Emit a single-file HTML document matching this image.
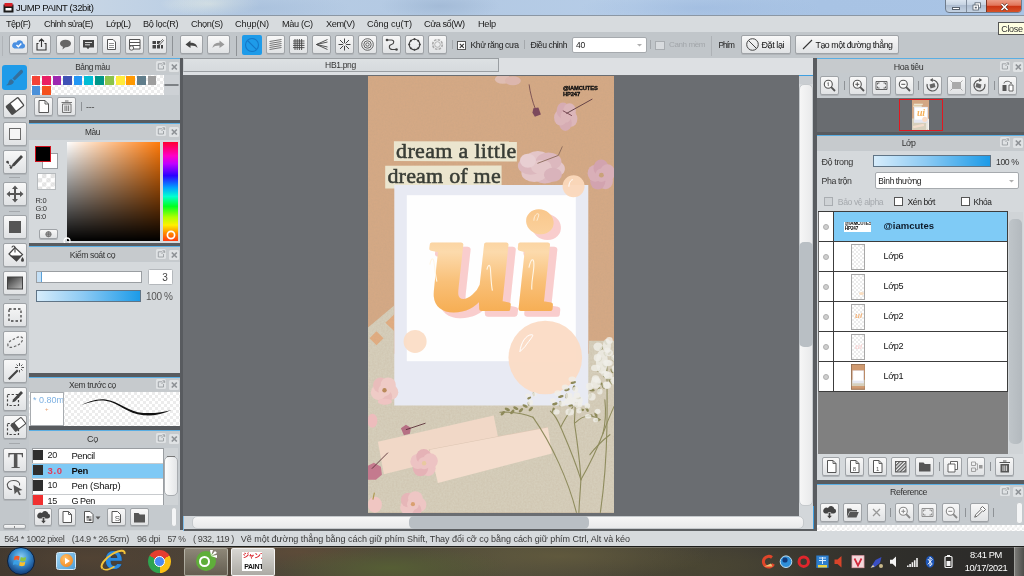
<!DOCTYPE html>
<html><head><meta charset="utf-8"><title>JUMP PAINT</title>
<style>
*{box-sizing:border-box;margin:0;padding:0}
html,body{width:1024px;height:576px;overflow:hidden;background:#d2d6d9}
body{font-family:"Liberation Sans",sans-serif;font-size:9px;color:#222;position:relative}
.abs,.abs>*{position:absolute}
#root{position:absolute;left:0;top:0;width:1024px;height:576px;overflow:hidden;will-change:transform;-webkit-font-smoothing:antialiased}
#root div,#root span,#root svg{position:absolute}
.t{white-space:nowrap;line-height:1}
/* title */
#title{left:0;top:0;width:1024px;height:16px;background:linear-gradient(90deg,#d3dde8 0,#c6d5e5 9%,#b7cce4 22%,#b3c9e3 45%,#b6cde8 62%,#a8c3e4 80%,#a9c4e5 100%)}
#menu{left:0;top:16px;width:1024px;height:16px;background:#d7dbde}
#menu span{top:4.300px;font-size:9.200px;color:#1a1a1a}
#tbar{left:0;top:32px;width:1024px;height:26px;background:#c1c6ca}
.btn{background:linear-gradient(#f8f8f8,#e0e2e4);border:1px solid #9fa3a7;border-radius:2px;box-shadow:0 1px 0 #b0b4b8}
.sep{width:1px;background:#8e9296}
.hdr{background:#c6cacd;height:15px;border-top:1.400px solid #5aaee3}
.hdr .t{font-size:9px;color:#333;top:3.500px}
.pbody{background:#d5d9dc}

.ck{background-color:#fff;background-image:linear-gradient(45deg,#ececec 25%,transparent 25%,transparent 75%,#ececec 75%),linear-gradient(45deg,#ececec 25%,transparent 25%,transparent 75%,#ececec 75%);background-size:6px 6px;background-position:0 0,3px 3px}
.dk{background:#585b5f}
.fl{width:10.500px;height:10px;background:#dfe2e4;border-radius:1.500px}
.cl{width:10.500px;height:10px;background:#dfe2e4;border-radius:1.500px}
body{letter-spacing:-.3px}
</style></head><body><div id="root">

<!-- TITLE BAR -->
<div id="title">
  <div style="left:0;top:0;width:1024px;height:16px;background:radial-gradient(ellipse 60px 14px at 440px 6px,rgba(150,175,205,.55),transparent),radial-gradient(ellipse 90px 16px at 260px 8px,rgba(160,185,215,.5),transparent),radial-gradient(ellipse 50px 12px at 210px 4px,rgba(235,240,230,.7),transparent),radial-gradient(ellipse 120px 16px at 700px 8px,rgba(150,180,220,.5),transparent)"></div>
  <div style="left:0;top:15.200px;width:1024px;height:1.200px;background:#8b97a4"></div>
  <svg width="11" height="11" viewBox="0 0 11 11" style="left:3px;top:2px"><rect x=".5" y="2.500" width="10" height="8" fill="#1a1a1a"/><rect x="1.500" y="1" width="8" height="3.500" fill="#d8232a"/><rect x="2.500" y="6" width="6" height="2.500" fill="#fff"/></svg>
  <span class="t" style="left:16px;top:3px;font-size:9.500px;color:#111;letter-spacing:-0.412px">JUMP PAINT (32bit)</span>
  <div style="left:944.500px;top:-2px;width:77.500px;height:14.800px;border:1px solid #6f7c8c;border-radius:0 0 4px 4px;background:linear-gradient(#dfe8f2 0,#c6d3e2 45%,#aebdd0 50%,#c4d2e2 100%);overflow:hidden">
    <div style="left:20.500px;top:0;width:1px;height:14px;background:#7f8c9c"></div>
    <div style="left:40.700px;top:0;width:36px;height:14px;background:linear-gradient(#eda48f 0,#e2755a 45%,#cb3413 52%,#d9582c 100%);border-left:1px solid #7a3424"></div>
    <div style="left:6.500px;top:8px;width:8px;height:2.600px;background:#fff;border:.6px solid #56606c"></div>
    <svg width="10" height="10" viewBox="0 0 10 10" style="left:26.500px;top:3px"><rect x="3" y=".8" width="5.500" height="5" fill="#fff" stroke="#56606c" stroke-width=".8"/><rect x="1" y="3" width="5.500" height="5" fill="#fff" stroke="#56606c" stroke-width=".8"/><rect x="2.800" y="4.800" width="2" height="1.600" fill="#56606c"/></svg>
    <svg width="9" height="8" viewBox="0 0 9 8" style="left:54.500px;top:4px"><path d="M1.500 1l6 6M7.500 1l-6 6" stroke="#5a2a20" stroke-width="2.800"/><path d="M1.500 1l6 6M7.500 1l-6 6" stroke="#fff" stroke-width="1.700"/></svg>
  </div>
</div>
<!-- MENU -->
<div id="menu">
  <span class="t" style="left:6px;letter-spacing:-0.562px">Tệp(F)</span>
  <span class="t" style="left:44px;letter-spacing:-0.479px">Chỉnh sửa(E)</span>
  <span class="t" style="left:106px;letter-spacing:-0.497px">Lớp(L)</span>
  <span class="t" style="left:143px;letter-spacing:-0.350px">Bộ lọc(R)</span>
  <span class="t" style="left:191px;letter-spacing:-0.370px">Chọn(S)</span>
  <span class="t" style="left:235px;letter-spacing:-0.120px">Chụp(N)</span>
  <span class="t" style="left:282px;letter-spacing:-0.365px">Màu (C)</span>
  <span class="t" style="left:326px;letter-spacing:-0.428px">Xem(V)</span>
  <span class="t" style="left:367px;letter-spacing:-0.106px">Công cụ(T)</span>
  <span class="t" style="left:424px;letter-spacing:-0.494px">Cửa sổ(W)</span>
  <span class="t" style="left:478px;letter-spacing:-0.302px">Help</span>
</div>
<!-- TOOLBAR -->
<div id="tbar">
  <div class="sep" style="left:2px;top:4px;height:20px;background:#b0b4b8"></div>
  <!-- file buttons -->
  <div class="btn" style="left:9px;top:3px;width:19px;height:19px"><svg width="17" height="17" viewBox="0 0 17 17"><path d="M4.5 12.5h8.3a2.6 2.6 0 0 0 .4-5.1 3.6 3.6 0 0 0-6.9-1A3.1 3.1 0 0 0 4.500 12.500z" fill="#4a90e2"/><path d="M6.500 9l1.800 1.800 3-3.300" stroke="#fff" stroke-width="1.400" fill="none"/></svg></div>
  <div class="btn" style="left:32px;top:3px;width:19px;height:19px"><svg width="17" height="17" viewBox="0 0 17 17"><path d="M5.500 7.500H4v6.500h9V7.500h-1.500M8.500 11V3.500M6 5.500l2.500-2.500 2.500 2.500" stroke="#333" stroke-width="1.100" fill="none"/></svg></div>
  <div class="btn" style="left:55.500px;top:3px;width:19px;height:19px"><svg width="17" height="17" viewBox="0 0 17 17"><ellipse cx="8.500" cy="7.500" rx="5.500" ry="3.800" fill="#666"/><path d="M6 10.500l-.5 3 3-2.500z" fill="#666"/></svg></div>
  <div class="btn" style="left:78.500px;top:3px;width:19px;height:19px"><svg width="17" height="17" viewBox="0 0 17 17"><path d="M3 4h11v7.500H9.500l-1.500 1.800-1.500-1.800H3z" fill="#444"/><path d="M5 6.500h7M5 8.800h5" stroke="#ddd" stroke-width="1"/></svg></div>
  <div class="btn" style="left:102px;top:3px;width:19px;height:19px"><svg width="17" height="17" viewBox="0 0 17 17"><path d="M4.500 3.500h5.500l2.500 2.500v7.500h-8z" fill="#fff" stroke="#555" stroke-width="1"/><path d="M6 7.500h5M6 9.500h5M6 11.500h5" stroke="#777" stroke-width=".8"/></svg></div>
  <div class="btn" style="left:125px;top:3px;width:19px;height:19px"><svg width="17" height="17" viewBox="0 0 17 17"><path d="M3.500 3.500h10.500v9.500h-10.500zM3.500 6.500h10.500M3.500 9.500h10.500" fill="#fff" stroke="#555" stroke-width="1"/><circle cx="5.500" cy="12" r="2.200" fill="#eee" stroke="#555" stroke-width=".9"/></svg></div>
  <div class="btn" style="left:148px;top:3px;width:19px;height:19px"><svg width="17" height="17" viewBox="0 0 17 17"><path d="M3.500 5h3.500v3h-3.500zM8 5h3v3h-3zM3.500 9h3.500v3.500h-3.500zM8 9h3v3.500h-3zM12 9h2v3.500h-2z" fill="#444"/><path d="M9.500 8l4-4.500 1 1-4 4.500z" fill="#fff" stroke="#444" stroke-width=".8"/></svg></div>
  <div class="sep" style="left:172px;top:4px;height:20px"></div>
  <!-- undo / redo -->
  <div class="btn" style="left:179.500px;top:3px;width:23px;height:19px"><svg width="21" height="17" viewBox="0 0 21 17"><path d="M4.500 8.500l5-4v2.300c4 0 6.500 1.700 7 5.200-1.500-2-3.500-2.600-7-2.600v2.600z" fill="#444"/></svg></div>
  <div class="btn" style="left:207px;top:3px;width:23px;height:19px"><svg width="21" height="17" viewBox="0 0 21 17"><path d="M16.500 8.500l-5-4v2.300c-4 0-6.500 1.700-7 5.200 1.500-2 3.500-2.600 7-2.600v2.600z" fill="#9a9a9a"/></svg></div>
  <div class="sep" style="left:235.500px;top:4px;height:20px"></div>
  <!-- snap buttons -->
  <div style="left:241.500px;top:2.500px;width:20px;height:20px;background:#1e9be9;border-radius:2px"><svg width="20" height="20" viewBox="0 0 20 20"><circle cx="10" cy="10" r="6.500" fill="none" stroke="#1578c8" stroke-width="1.100"/><path d="M5.500 5.500l9 9" stroke="#1578c8" stroke-width="1.100"/></svg></div>
  <div class="btn" style="left:265.500px;top:3px;width:19px;height:19px"><svg width="17" height="17" viewBox="0 0 17 17"><path d="M2.500 5.500l12-2M2.500 7.500l12-2M2.500 9.500l12-2M2.500 11.500l12-2M2.500 13.500l12-2" stroke="#555" stroke-width=".8"/></svg></div>
  <div class="btn" style="left:288.500px;top:3px;width:19px;height:19px"><svg width="17" height="17" viewBox="0 0 17 17"><path d="M3 5h11.500M3 7.200h11.500M3 9.400h11.500M3 11.600h11.500M5 3v11M7.200 3v11M9.400 3v11M11.600 3v11" stroke="#444" stroke-width=".9"/></svg></div>
  <div class="btn" style="left:311.500px;top:3px;width:19px;height:19px"><svg width="17" height="17" viewBox="0 0 17 17"><path d="M14.500 3.500l-11 5 11 5M14.500 6l-11 2.500 11 2.500" stroke="#444" stroke-width=".9" fill="none"/></svg></div>
  <div class="btn" style="left:335px;top:3px;width:19px;height:19px"><svg width="17" height="17" viewBox="0 0 17 17"><path d="M8.500 2.500v12M2.500 8.500h12M4 4l9 9M13 4l-9 9" stroke="#444" stroke-width="1"/><circle cx="8.500" cy="8.500" r="1.600" fill="#f2f2f2"/></svg></div>
  <div class="btn" style="left:358px;top:3px;width:19px;height:19px"><svg width="17" height="17" viewBox="0 0 17 17"><g fill="none" stroke="#555" stroke-width=".9"><circle cx="8.500" cy="8.500" r="5.800"/><circle cx="8.500" cy="8.500" r="3.700"/><circle cx="8.500" cy="8.500" r="1.700"/></g></svg></div>
  <div class="btn" style="left:381.500px;top:3px;width:19px;height:19px"><svg width="17" height="17" viewBox="0 0 17 17"><path d="M4 4h4.500c3 0 3 4 0 4.500s-3 5 1 5h4" fill="none" stroke="#444" stroke-width="1.100"/><circle cx="4" cy="4" r="1.300" fill="#444"/><circle cx="13.500" cy="13.500" r="1.300" fill="#444"/></svg></div>
  <div class="btn" style="left:404.500px;top:3px;width:19px;height:19px"><svg width="17" height="17" viewBox="0 0 17 17"><circle cx="8.500" cy="8.500" r="5.300" fill="none" stroke="#444" stroke-width="1.100"/><g fill="#444"><circle cx="8.500" cy="3.200" r="1.100"/><circle cx="8.500" cy="13.800" r="1.100"/><circle cx="3.200" cy="8.500" r="1.100"/><circle cx="13.800" cy="8.500" r="1.100"/><circle cx="4.800" cy="4.800" r="1"/><circle cx="12.200" cy="4.800" r="1"/><circle cx="4.800" cy="12.200" r="1"/><circle cx="12.200" cy="12.200" r="1"/></g></svg></div>
  <div class="btn" style="left:428px;top:3px;width:19px;height:19px"><svg width="17" height="17" viewBox="0 0 17 17"><circle cx="8.500" cy="8.500" r="4.800" fill="none" stroke="#aaa" stroke-width="1.600" stroke-dasharray="2.500 1.200"/><circle cx="8.500" cy="8.500" r="2.800" fill="none" stroke="#aaa" stroke-width=".9"/></svg></div>
  <div class="sep" style="left:451.500px;top:8.300px;height:8.500px;background:#a4a8ac"></div>
  <!-- anti alias -->
  <div style="left:456.500px;top:8.800px;width:9.500px;height:9.500px;background:#fff;border:1px solid #555"><svg width="8" height="8" viewBox="0 0 8 8" style="left:0;top:0"><path d="M1.800 1.800l4 4M5.800 1.800l-4 4" stroke="#333" stroke-width="1.100"/></svg></div>
  <span class="t" style="left:470.500px;top:8.800px;font-size:8.60px;letter-spacing:-0.416px">Khử răng cưa</span>
  <div class="sep" style="left:524px;top:8.300px;height:8.500px;background:#a4a8ac"></div>
  <span class="t" style="left:530.500px;top:8.800px;font-size:8.63px;letter-spacing:-0.418px">Điều chỉnh</span>
  <div style="left:572px;top:4.500px;width:74.500px;height:16.500px;background:#fff;border:1px solid #a6aaae;border-radius:2px"><span class="t" style="left:3px;top:3.500px;font-size:8.500px;letter-spacing:-.3px">40</span><svg width="7" height="5" viewBox="0 0 7 5" style="left:63px;top:5.500px"><path d="M1 1l2.500 2.500L6 1z" fill="#b0b0b0"/></svg></div>
  <div class="sep" style="left:649.500px;top:8.300px;height:8.500px;background:#a4a8ac"></div>
  <div style="left:655px;top:8.800px;width:9.500px;height:9.500px;background:#d8dbde;border:1px solid #a9adb1"></div>
  <span class="t" style="left:669px;top:8.800px;color:#a2a6aa;font-size:8.06px;letter-spacing:-0.408px">Canh mềm</span>
  <div class="sep" style="left:711px;top:4px;height:20px;background:#aeb2b6"></div>
  <span class="t" style="left:718.500px;top:8.800px;font-size:8.30px;letter-spacing:-0.958px">Phím</span>
  <div class="btn" style="left:740.500px;top:3px;width:50px;height:19px"><svg width="15" height="15" viewBox="0 0 15 15" style="left:3.500px;top:1px"><circle cx="7.500" cy="7.500" r="5.800" fill="none" stroke="#444" stroke-width="1"/><path d="M3.500 3.500l8 8" stroke="#444" stroke-width="1"/></svg><span class="t" style="left:20px;top:4.500px;color:#111;letter-spacing:-0.419px">Đặt lại</span></div>
  <div class="btn" style="left:794.500px;top:3px;width:104px;height:19px"><svg width="11" height="11" viewBox="0 0 11 11" style="left:6px;top:3px"><path d="M1 10l9-9" stroke="#333" stroke-width="1.100"/></svg><span class="t" style="left:20px;top:4.500px;color:#111;font-size:8.75px;letter-spacing:-0.420px">Tạo một đường thẳng</span></div>
</div>

<div style="left:998px;top:22.400px;width:27px;height:12.800px;background:#ffffe1;border:1px solid #555"><span class="t" style="left:2.300px;top:1.800px;font-size:9px;color:#333;letter-spacing:-.35px">Close</span></div>
<!-- LEFT TOOL COLUMN -->
<div id="ltools" style="left:0;top:58px;width:29px;height:473px;background:#c2c7cb"></div>
<div style="left:2px;top:65px;width:25px;height:25px;background:#1e9be9;border-radius:3px"><svg width="25" height="25" viewBox="0 0 25 25"><path d="M20.300 5.200c1 .9 1 1.900.2 2.800l-7.800 7.600-2.300-2.200 7.600-7.900c.8-.8 1.600-.9 2.300-.3z" fill="#356f9b"/><path d="M9.600 14.200l2.300 2.200c-.3 2.600-3.300 4.200-8 3.800 2-1 2.400-2.100 2.800-3.500.5-1.600 1.500-2.500 2.900-2.500z" fill="#356f9b"/></svg></div>
<div class="btn tb" style="left:2.500px;top:93.5px;width:24px;height:24px"><svg width="22" height="22" viewBox="0 0 22 22"><g transform="rotate(-38 11 11)"><rect x="3.500" y="6" width="15" height="10" rx="1" fill="#fff" stroke="#4a4a4a" stroke-width="1.300"/><rect x="3.500" y="6" width="5.500" height="10" fill="#4a4a4a"/></g></svg></div>
<div class="btn tb" style="left:2.500px;top:121.5px;width:24px;height:24px"><svg width="22" height="22" viewBox="0 0 22 22"><rect x="5.500" y="5.500" width="11" height="11" fill="#f6f6f6" stroke="#6a6a6a" stroke-width="1"/></svg></div>
<div class="btn tb" style="left:2.500px;top:149.5px;width:24px;height:24px"><svg width="22" height="22" viewBox="0 0 22 22"><path d="M17 4l2 2-8.500 9-2.800.8.800-2.800z" fill="#444"/><path d="M3.500 11l3.500 5 1.500-1.500" stroke="#444" stroke-width="1.200" fill="none" stroke-dasharray="2 1.500"/><circle cx="3.500" cy="11" r="1.300" fill="#444"/><circle cx="7" cy="16.500" r="1.300" fill="#444"/></svg></div>
<div class="btn tb" style="left:2.500px;top:181.5px;width:24px;height:24px"><svg width="22" height="22" viewBox="0 0 22 22"><path d="M11 2.500l3 3.500h-2v4h4v-2l3.500 3-3.500 3v-2h-4v4h2l-3 3.500-3-3.500h2v-4h-4v2l-3.500-3 3.500-3v2h4v-4h-2z" fill="#555"/></svg></div>
<div class="btn tb" style="left:2.500px;top:215px;width:24px;height:24px"><svg width="22" height="22" viewBox="0 0 22 22"><rect x="5" y="5" width="12" height="12" fill="#555"/></svg></div>
<div class="btn tb" style="left:2.500px;top:243px;width:24px;height:24px"><svg width="22" height="22" viewBox="0 0 22 22"><path d="M5 10l6-6.500 7.500 7-6 6.500z" fill="#fff" stroke="#444" stroke-width="1.200"/><path d="M5.500 11.500h12l-5 5.500z" fill="#444"/><path d="M8 3.500c0-2 3-2 3 0v5" stroke="#444" stroke-width="1.100" fill="none"/><path d="M18.500 13c1 1.500 1.500 2.500 1.500 3.300a1.500 1.500 0 0 1-3 0c0-.8.500-1.800 1.500-3.300z" fill="#444"/></svg></div>
<div class="btn tb" style="left:2.500px;top:270.5px;width:24px;height:24px"><svg width="22" height="22" viewBox="0 0 22 22"><defs><linearGradient id="gd" x1="0" y1="0" x2="1" y2="1"><stop offset="0" stop-color="#333"/><stop offset="1" stop-color="#bbb"/></linearGradient></defs><rect x="3.500" y="5" width="15" height="12" fill="url(#gd)" stroke="#444" stroke-width="1"/></svg></div>
<div class="btn tb" style="left:2.500px;top:303px;width:24px;height:24px"><svg width="22" height="22" viewBox="0 0 22 22"><rect x="5" y="5" width="12" height="12" fill="none" stroke="#444" stroke-width="1.300" stroke-dasharray="2.500 2"/></svg></div>
<div class="btn tb" style="left:2.500px;top:331px;width:24px;height:24px"><svg width="22" height="22" viewBox="0 0 22 22"><path d="M4 14c-1-3 2-5 5-6.500s7-4 9-2-1 6-4 7.500-9 4-10 1z" fill="none" stroke="#666" stroke-width="1.200" stroke-dasharray="2.500 1.800"/></svg></div>
<div class="btn tb" style="left:2.500px;top:359px;width:24px;height:24px"><svg width="22" height="22" viewBox="0 0 22 22"><path d="M4 18.500l9-9 1.500 1.500-9 9z" fill="#444"/><path d="M15.500 3v3M15.500 10v2.500M11 7.500h3M17.500 7.500h2.500M12.500 4.500l1.500 1.500M18.500 4.500l-1.500 1.500M18.500 10.500l-1.500-1.500" stroke="#555" stroke-width="1"/></svg></div>
<div class="btn tb" style="left:2.500px;top:387px;width:24px;height:24px"><svg width="22" height="22" viewBox="0 0 22 22"><rect x="3.500" y="6.500" width="11" height="11" fill="none" stroke="#444" stroke-width="1.200" stroke-dasharray="2.300 1.800"/><path d="M17 3l2 2-8 8.500-2.700.7.700-2.700z" fill="#444"/></svg></div>
<div class="btn tb" style="left:2.500px;top:415px;width:24px;height:24px"><svg width="22" height="22" viewBox="0 0 22 22"><rect x="3.500" y="7.500" width="11" height="11" fill="none" stroke="#444" stroke-width="1.200" stroke-dasharray="2.300 1.800"/><g transform="rotate(-38 14 8)"><rect x="7.500" y="4.500" width="13" height="8" rx="1" fill="#fff" stroke="#4a4a4a" stroke-width="1.100"/><rect x="7.500" y="4.500" width="4.500" height="8" fill="#4a4a4a"/></g></svg></div>
<div class="btn tb" style="left:2.500px;top:447.5px;width:24px;height:24px"><span class="t" style="left:4.500px;top:0px;font-family:'Liberation Serif',serif;font-size:23px;color:#555;font-weight:bold">T</span></div>
<div class="btn tb" style="left:2.500px;top:475.5px;width:24px;height:24px"><svg width="22" height="22" viewBox="0 0 22 22"><path d="M3.500 9c-1-3 2-5.500 6-5.500s7 2 6 5" fill="none" stroke="#555" stroke-width="1.100"/><path d="M3.500 9c.5 2 2.500 3.500 4.500 3.500" fill="none" stroke="#555" stroke-width="1.100"/><path d="M9.500 8l9 5-3.700.8 2 3.700-1.600.8-2-3.700-2.600 2.600z" fill="#555"/></svg></div>
<div style="left:9px;top:177px;width:11px;height:1px;background:#a4a8ac"></div>
<div style="left:9px;top:211px;width:11px;height:1px;background:#a4a8ac"></div>
<div style="left:9px;top:298.5px;width:11px;height:1px;background:#a4a8ac"></div>
<div style="left:9px;top:443px;width:11px;height:1px;background:#a4a8ac"></div>
<div class="btn" style="left:3px;top:523.500px;width:23px;height:5.500px;border-radius:2px"><div style="left:10px;top:1px;width:1px;height:2px;background:#888"></div></div>

<!-- LEFT PANELS -->
<div style="left:29px;top:58px;width:151px;height:472px;background:#c5cace"></div>
<div class="dk" style="left:180px;top:57.500px;width:2.500px;height:472.500px"></div>
<div class="hdr" style="left:29px;top:58px;width:151px"><span class="t" style="left:0;width:127px;text-align:center;font-size:8.32px;letter-spacing:-0.415px">Bảng màu</span><div class="fl" style="left:126.500px;top:1.700px"><svg width="10.500" height="10" viewBox="0 0 10.500 10"><path d="M6 2.800H2.300v5.200h5.200V5" fill="none" stroke="#9a9ea2" stroke-width=".9"/><path d="M5.500 5l3-3M6.500 1.800h2.200V4" fill="none" stroke="#9a9ea2" stroke-width=".9"/></svg></div><div class="cl" style="left:139.5px;top:2.500px"><svg width="10.500" height="10" viewBox="0 0 10.500 10"><path d="M2.800 2.500l5 5M7.800 2.500l-5 5" stroke="#8e9296" stroke-width="1.700"/></svg></div></div>
<div class="ck" style="left:30.5px;top:74.500px;width:133px;height:20px"></div>
<div style="left:31.50px;top:76px;width:8.800px;height:8.800px;background:#f44336"></div><div style="left:42.05px;top:76px;width:8.800px;height:8.800px;background:#e91e63"></div><div style="left:52.60px;top:76px;width:8.800px;height:8.800px;background:#9c27b0"></div><div style="left:63.15px;top:76px;width:8.800px;height:8.800px;background:#3f51b5"></div><div style="left:73.70px;top:76px;width:8.800px;height:8.800px;background:#2196f3"></div><div style="left:84.25px;top:76px;width:8.800px;height:8.800px;background:#00bcd4"></div><div style="left:94.80px;top:76px;width:8.800px;height:8.800px;background:#009688"></div><div style="left:105.35px;top:76px;width:8.800px;height:8.800px;background:#8bc34a"></div><div style="left:115.90px;top:76px;width:8.800px;height:8.800px;background:#ffeb3b"></div><div style="left:126.45px;top:76px;width:8.800px;height:8.800px;background:#ff9800"></div><div style="left:137.00px;top:76px;width:8.800px;height:8.800px;background:#607d8b"></div><div style="left:147.55px;top:76px;width:8.800px;height:8.800px;background:#9e9e9e"></div><div style="left:31.500px;top:86px;width:8.800px;height:8.500px;background:#4a90d9"></div><div style="left:42.050px;top:86px;width:8.800px;height:8.500px;background:#f4511e"></div>
<div style="left:163.500px;top:74.500px;width:15.500px;height:20px;background:#cdd1d5"></div><div style="left:163.500px;top:83.500px;width:15px;height:2.500px;background:#d9dcdf;border:.8px solid #7d8185;border-radius:1px"></div>
<div class="btn" style="left:33.500px;top:96.500px;width:19px;height:19px"><svg width="17" height="17" viewBox="0 0 17 17"><path d="M4 2.500h6l3.500 3.500v8.500H4z" fill="#fff" stroke="#555" stroke-width="1"/><path d="M10 2.500v3.500h3.500" fill="none" stroke="#555" stroke-width=".9"/></svg></div>
<div class="btn" style="left:56.500px;top:96.500px;width:19px;height:19px"><svg width="17" height="17" viewBox="0 0 17 17"><path d="M4.500 6h8.500v8.500h-8.500zM3.500 4.500h10.500M7 3h3.500M7 7.500v5.500M8.800 7.500v5.500M10.600 7.500v5.500" fill="none" stroke="#666" stroke-width=".9"/></svg></div>
<div class="sep" style="left:80.500px;top:102px;height:9px"></div><span class="t" style="left:86px;top:103px;color:#444">---</span>
<div class="dk" style="left:29px;top:120px;width:151px;height:3px"></div>
<div class="hdr" style="left:29px;top:123px;width:151px"><span class="t" style="left:0;width:127px;text-align:center;font-size:8.30px;letter-spacing:-0.445px">Màu</span><div class="fl" style="left:126.500px;top:1.700px"><svg width="10.500" height="10" viewBox="0 0 10.500 10"><path d="M6 2.800H2.300v5.200h5.200V5" fill="none" stroke="#9a9ea2" stroke-width=".9"/><path d="M5.500 5l3-3M6.500 1.800h2.200V4" fill="none" stroke="#9a9ea2" stroke-width=".9"/></svg></div><div class="cl" style="left:139.5px;top:2.500px"><svg width="10.500" height="10" viewBox="0 0 10.500 10"><path d="M2.800 2.500l5 5M7.800 2.500l-5 5" stroke="#8e9296" stroke-width="1.700"/></svg></div></div>
<div class="pbody" style="left:29px;top:140px;width:151px;height:103px"></div>
<div style="left:66.800px;top:141.800px;width:93.500px;height:99.500px;background:linear-gradient(to top,#000,rgba(0,0,0,0)),linear-gradient(to right,#fff,#ff7a0a)"></div>
<div style="left:163.400px;top:141.800px;width:14.800px;height:99.500px;background:linear-gradient(to bottom,#ff0030 0%,#ff00c8 14%,#c000ff 22%,#2a00ff 34%,#00a0ff 46%,#00ffd0 55%,#00ff20 65%,#b0ff00 76%,#fff000 84%,#ff8a00 92%,#ff3a10 100%)"></div>
<svg width="12" height="12" viewBox="0 0 12 12" style="left:164.800px;top:228.500px"><circle cx="6" cy="6" r="3.600" fill="none" stroke="#fff" stroke-width="1.700"/></svg>
<svg width="8" height="8" viewBox="0 0 8 8" style="left:62.800px;top:237.300px"><circle cx="4" cy="4" r="3" fill="none" stroke="#fff" stroke-width="1.300"/></svg>
<div style="left:42px;top:153.200px;width:16px;height:15.500px;background:#fff;border:1px solid #9a9ea2"></div>
<div style="left:34.800px;top:146px;width:16.200px;height:16px;background:#000;border:1.600px solid #d0101c"></div>
<div style="left:37px;top:173.300px;width:18.800px;height:17.200px;border:1px solid #b6babd;background-color:#fff;background-image:linear-gradient(45deg,#e2e2e2 25%,transparent 25%,transparent 75%,#e2e2e2 75%),linear-gradient(45deg,#e2e2e2 25%,transparent 25%,transparent 75%,#e2e2e2 75%);background-size:8.400px 8.400px;background-position:0 0,4.200px 4.200px"></div>
<span class="t" style="left:35.500px;top:196.500px;font-size:7.500px;color:#333">R:0</span><span class="t" style="left:35.500px;top:204.800px;font-size:7.500px;color:#333">G:0</span><span class="t" style="left:35.500px;top:213px;font-size:7.500px;color:#333">B:0</span>
<div class="btn" style="left:38.600px;top:228.800px;width:19.200px;height:10.400px"><svg width="17" height="8" viewBox="0 0 17 8"><circle cx="8.500" cy="4.200" r="2.700" fill="#999" stroke="#666" stroke-width=".7"/><path d="M8.500 1.500v5.400M5.800 4.200h5.400" stroke="#666" stroke-width=".6"/></svg></div>
<div class="dk" style="left:29px;top:243px;width:151px;height:3.300px"></div>
<div class="hdr" style="left:29px;top:246.3px;width:151px"><span class="t" style="left:0;width:127px;text-align:center;font-size:8.72px;letter-spacing:-0.419px">Kiểm soát cọ</span><div class="fl" style="left:126.500px;top:1.700px"><svg width="10.500" height="10" viewBox="0 0 10.500 10"><path d="M6 2.800H2.300v5.200h5.200V5" fill="none" stroke="#9a9ea2" stroke-width=".9"/><path d="M5.500 5l3-3M6.500 1.800h2.200V4" fill="none" stroke="#9a9ea2" stroke-width=".9"/></svg></div><div class="cl" style="left:139.5px;top:2.500px"><svg width="10.500" height="10" viewBox="0 0 10.500 10"><path d="M2.800 2.500l5 5M7.800 2.500l-5 5" stroke="#8e9296" stroke-width="1.700"/></svg></div></div>
<div class="pbody" style="left:29px;top:262px;width:151px;height:111px"></div>
<div style="left:36px;top:271.200px;width:106.400px;height:12.200px;background:#fff;border:1px solid #9a9ea2"><div style="left:0;top:0;width:4.500px;height:10.200px;background:#c4e0f6;border-right:1px solid #5aa0d8"></div></div>
<div style="left:147.500px;top:269.400px;width:25px;height:16px;background:#fff;border:1px solid #b4b8bc;border-radius:1.500px"><span class="t" style="left:0;top:2.500px;width:19px;text-align:right;font-size:10px;color:#444">3</span></div>
<div style="left:36px;top:290px;width:104.800px;height:11.800px;border:1px solid #5f7486;background:linear-gradient(to right,#d6ecfb,#8ccaf3 45%,#1c9be8)"></div>
<span class="t" style="left:146px;top:291.500px;font-size:10px;color:#555;letter-spacing:-0.340px">100 %</span>
<div class="dk" style="left:29px;top:373px;width:151px;height:3.500px"></div>
<div class="hdr" style="left:29px;top:376.5px;width:151px"><span class="t" style="left:0;width:127px;text-align:center;font-size:8.51px;letter-spacing:-0.417px">Xem trước cọ</span><div class="fl" style="left:126.500px;top:1.700px"><svg width="10.500" height="10" viewBox="0 0 10.500 10"><path d="M6 2.800H2.300v5.200h5.200V5" fill="none" stroke="#9a9ea2" stroke-width=".9"/><path d="M5.500 5l3-3M6.500 1.800h2.200V4" fill="none" stroke="#9a9ea2" stroke-width=".9"/></svg></div><div class="cl" style="left:139.5px;top:2.500px"><svg width="10.500" height="10" viewBox="0 0 10.500 10"><path d="M2.800 2.500l5 5M7.800 2.500l-5 5" stroke="#8e9296" stroke-width="1.700"/></svg></div></div>
<div class="ck" style="left:29px;top:392px;width:151px;height:34.300px"></div>
<div style="left:29.500px;top:392px;width:34.200px;height:34.300px;background:#fff;border:1px solid #a8acb0;overflow:hidden"><span class="t" style="left:2.500px;top:3px;font-size:9px;color:#7eb1e2;letter-spacing:0">* 0.80mm</span><span class="t" style="left:14.500px;top:12.500px;font-size:6px;color:#e8a070">+</span></div>
<svg width="116" height="34" viewBox="63.600 392 116 34" style="left:63.600px;top:392px"><path d="M78 406.400C88 401.500 96 398.400 105 399.400c13 1.500 22 12.300 38 13.500 10 .8 20-.8 28-3-8 4-18 6.200-28 5.400-16-1.300-25-12.800-38-14.500-9-1-17 1.700-27 5.600z" fill="#111"/></svg>
<div class="dk" style="left:29px;top:426.300px;width:151px;height:3.700px"></div>
<div class="hdr" style="left:29px;top:430px;width:151px"><span class="t" style="left:0;width:127px;text-align:center;font-size:9px;letter-spacing:-.2px">Cọ</span><div class="fl" style="left:126.500px;top:1.700px"><svg width="10.500" height="10" viewBox="0 0 10.500 10"><path d="M6 2.800H2.300v5.200h5.200V5" fill="none" stroke="#9a9ea2" stroke-width=".9"/><path d="M5.500 5l3-3M6.500 1.800h2.200V4" fill="none" stroke="#9a9ea2" stroke-width=".9"/></svg></div><div class="cl" style="left:139.5px;top:2.500px"><svg width="10.500" height="10" viewBox="0 0 10.500 10"><path d="M2.800 2.500l5 5M7.800 2.500l-5 5" stroke="#8e9296" stroke-width="1.700"/></svg></div></div>
<div style="left:31.500px;top:448.300px;width:132px;height:57px;background:#fff;border:1px solid #9a9ea2;border-bottom:none"></div>
<div style="left:32.800px;top:450.00px;width:10.700px;height:10.4px;background:#2e2e2e"></div><span class="t" style="left:47.500px;top:451.30px;color:#222;font-size:9.09px;letter-spacing:-0.409px">20</span><span class="t" style="left:71.400px;top:451.30px;color:#111;font-size:9.47px;letter-spacing:-0.419px">Pencil</span>
<div style="left:32px;top:463.37px;width:131px;height:15.07px;background:#7fc9f5"></div><div style="left:32px;top:463.37px;width:131px;height:1px;background:#c8cbce"></div><div style="left:32.800px;top:465.07px;width:10.700px;height:10.4px;background:#2e2e2e"></div><span class="t" style="left:47.500px;top:466.37px;font-size:9.500px;font-weight:bold;color:#e23c58;letter-spacing:0.641px">3.0</span><span class="t" style="left:71.400px;top:466.37px;font-size:9.500px;font-weight:bold;color:#111;letter-spacing:-0.219px">Pen</span>
<div style="left:32px;top:478.44px;width:131px;height:1px;background:#c8cbce"></div><div style="left:32.800px;top:480.14px;width:10.700px;height:10.4px;background:#2e2e2e"></div><span class="t" style="left:47.500px;top:481.44px;color:#222;font-size:9.09px;letter-spacing:-0.409px">10</span><span class="t" style="left:71.400px;top:481.44px;font-size:9.500px;color:#111;letter-spacing:-0.203px">Pen (Sharp)</span>
<div style="left:32px;top:493.51px;width:131px;height:1px;background:#c8cbce"></div><div style="left:32.800px;top:495.21px;width:10.700px;height:9.5px;background:#f03030"></div><span class="t" style="left:47.500px;top:496.51px;color:#222;font-size:9.09px;letter-spacing:-0.409px">15</span><span class="t" style="left:71.400px;top:496.51px;color:#111;font-size:9.06px;letter-spacing:-0.414px">G Pen</span>
<div style="left:163.800px;top:448.300px;width:14.400px;height:57px;background:#cfd3d6"></div><div style="left:164.200px;top:456px;width:13.600px;height:40px;border-radius:5px;background:linear-gradient(to right,#fdfdfd,#e4e6e8);border:1px solid #a9adb1"></div><div style="left:167px;top:456px;width:8px;height:1px;background:#777"></div>
<div style="left:29px;top:505.300px;width:151px;height:24.700px;background:#c5cace"></div>
<div class="btn" style="left:33.600px;top:508px;width:18.700px;height:18.300px"><svg width="17" height="16" viewBox="0 0 17 16"><path d="M4 9.500h9a2.400 2.400 0 0 0 .3-4.700 3.300 3.300 0 0 0-6.300-.9A2.900 2.900 0 0 0 4 9.500z" fill="#444"/><path d="M7.300 8.500h2.400v3h1.800l-3 3.300-3-3.300h1.800z" fill="#444" stroke="#f0f0f0" stroke-width=".6"/></svg></div>
<div class="btn" style="left:57.500px;top:508px;width:18.300px;height:18.300px"><svg width="16" height="16" viewBox="0 0 16 16"><path d="M4 2.500h5.500l3 3v8H4z" fill="#fff" stroke="#555" stroke-width="1"/><path d="M9.500 2.500v3h3" fill="none" stroke="#555" stroke-width=".9"/></svg></div>
<svg width="22" height="18" viewBox="0 0 22 18" style="left:80.500px;top:508px"><path d="M3.500 3.500h5.500l3 3v8H3.500z" fill="#fff" stroke="#555" stroke-width="1"/><path d="M5.500 8h2.500v2.500h-2.500zM8 10.500h2.500v2.500H8z" fill="#666"/><path d="M5.500 10.500h2.500v2.500h-2.500zM8 8h2.500v2.500H8z" fill="#aaa"/><path d="M14.500 8.500h5l-2.500 3z" fill="#555"/></svg>
<div class="btn" style="left:107.400px;top:508px;width:18.500px;height:18.300px"><svg width="16" height="16" viewBox="0 0 16 16"><path d="M4 2.500h5.500l3 3v8H4z" fill="#fff" stroke="#555" stroke-width="1"/></svg><span class="t" style="left:6.300px;top:5.500px;font-size:8px;color:#555;letter-spacing:0">S</span></div>
<div class="btn" style="left:130.200px;top:508px;width:18.700px;height:18.300px"><svg width="17" height="16" viewBox="0 0 17 16"><path d="M3 4h4.500l1.300 1.500H14v8H3z" fill="#555"/></svg></div>
<div style="left:171px;top:507px;width:6.400px;height:20px;border-radius:3px;background:#f4f5f6;border:.8px solid #c4c8cb"></div>

<!-- WORKSPACE -->
<div id="work" style="left:182.500px;top:57.500px;width:634.500px;height:473px;background:#6a6d71;overflow:hidden">
  <div style="left:0;top:0;width:634.500px;height:17.300px;background:#dde0e3"></div>
  <div style="left:0.500px;top:0;width:315.700px;height:14.300px;background:linear-gradient(#dde1e3,#d6dadd);border:1px solid #9a9ea2;border-left-color:#c9cdd0"><span class="t" style="left:0;top:2.800px;width:313px;text-align:center;font-size:8.500px;color:#333;letter-spacing:-0.316px">HB1.png</span></div>
  <!-- v scrollbar -->
  <div style="left:616px;top:17.300px;width:14.500px;height:442px;background:#d3d7da"></div>
  <div style="left:616px;top:17px;width:14.500px;height:1px;background:#3f9fe0"></div><div style="left:616.500px;top:18px;width:13.800px;height:8px;background:#c9cdd1"></div>
  <div style="left:616.500px;top:26px;width:13.800px;height:422px;border-radius:5px;background:linear-gradient(to right,#f6f6f6,#e9eaeb);border:1px solid #c5c9cc"></div>
  <div style="left:616.500px;top:184.500px;width:13.800px;height:105px;border-radius:5px;background:#b9bfc4"></div>
  <div style="left:630.500px;top:0;width:4px;height:473px;background:#595c60"></div>
  <div style="left:630.800px;top:448px;width:1px;height:25px;background:#3f9fe0"></div>
  <!-- h scrollbar -->
  <div style="left:0;top:458px;width:630.500px;height:13.300px;background:#d3d7da"></div><div style="left:0;top:471.200px;width:634.500px;height:2px;background:#5c5f62"></div>
  <div style="left:0.800px;top:458px;width:1px;height:15px;background:#7fbce8"></div>
  <div style="left:9.500px;top:458.300px;width:612px;height:12.800px;border-radius:5px;background:linear-gradient(#f6f6f6,#e9eaeb);border:1px solid #c5c9cc"></div>
  <div style="left:226px;top:458.300px;width:180px;height:12.800px;border-radius:5px;background:#b9bfc4"></div>
  
  <svg width="246.200" height="436.400" viewBox="368.100 76.300 246.200 436.400" style="left:185.600px;top:18.800px" font-family="Liberation Serif, serif">
  <defs>
    <linearGradient id="og" gradientUnits="userSpaceOnUse" x1="0" y1="-105" x2="0" y2="5"><stop offset="0" stop-color="#f9c68a"/><stop offset=".3" stop-color="#fbd3a0"/><stop offset=".42" stop-color="#fcdaac"/><stop offset=".7" stop-color="#f9c078"/><stop offset="1" stop-color="#f6ad52"/></linearGradient>
    <radialGradient id="pf" cx=".5" cy=".5" r=".5"><stop offset="0" stop-color="#c9a070"/><stop offset=".18" stop-color="#f0b9b8"/><stop offset="1" stop-color="#f3c9c6"/></radialGradient>
    <radialGradient id="lf" cx=".5" cy=".5" r=".5"><stop offset="0" stop-color="#d8b0b4"/><stop offset="1" stop-color="#e3c4c6"/></radialGradient>
    <filter id="nz" x="0" y="0" width="100%" height="100%"><feTurbulence type="fractalNoise" baseFrequency=".55" numOctaves="2" seed="4"/><feColorMatrix values="0 0 0 0 .45  0 0 0 0 .33  0 0 0 0 .22  0 0 0 .55 -.12"/></filter>
    <filter id="bl" x="-20%" y="-20%" width="140%" height="140%"><feGaussianBlur stdDeviation=".7"/></filter>
    <filter id="bl2" x="-20%" y="-20%" width="140%" height="140%"><feGaussianBlur stdDeviation="1.100"/></filter>
  </defs>
  <!-- kraft -->
  <rect x="368" y="76" width="247" height="437" fill="#d5a985"/>
  <!-- beige lower -->
  <path d="M368 328L394 306v48h195v-13h26v172H368z" fill="#d6cfbc"/>
  <path d="M376.600 331.600l7 7-7 7-7-7z" fill="#e2ad82"/>
  <path d="M394.500 314.500l-9 8.500 9 8.500z" fill="#e2ad82"/>
  
  <rect x="368" y="76" width="247" height="437" filter="url(#nz)" opacity=".5"/>
  <!-- top flowers -->
  <g filter="url(#bl)">
    <ellipse cx="503" cy="79.500" rx="8" ry="4.500" fill="#dfbdb2"/><ellipse cx="513" cy="81" rx="8" ry="4.500" fill="#dcb6ad"/>
    <path d="M529.200 84.700c1 8 3.500 18 6.500 25" stroke="#6a4048" stroke-width=".8" fill="none"/>
    <path d="M533.500 108.500l5-.8 2.500 7-6 2.300-2.500-4z" fill="#7c4a5c"/>
    <g opacity="1"><ellipse cx="571.1" cy="119.1" rx="6.4" ry="7.9" fill="#dcb6ba"/><ellipse cx="565.5" cy="123.3" rx="6.4" ry="7.9" fill="#d6acb3"/><ellipse cx="560.6" cy="118.0" rx="6.4" ry="7.9" fill="#dcb6ba"/><ellipse cx="563.2" cy="110.7" rx="6.4" ry="7.9" fill="#d6acb3"/><ellipse cx="569.6" cy="111.4" rx="6.4" ry="7.9" fill="#dcb6ba"/><ellipse cx="566" cy="116.5" rx="5.2" ry="6.4" fill="#dcb6ba"/></g>
    <path d="M592.500 99.300l-26 14.500" stroke="#5a3a40" stroke-width=".9"/><path d="M563 111l9 5" stroke="#7a4a55" stroke-width="1"/>
    <g opacity="1"><ellipse cx="552.2" cy="169.0" rx="12.8" ry="9.0" fill="#e4c6c9"/><ellipse cx="545.0" cy="174.8" rx="12.8" ry="9.0" fill="#dcb8be"/><ellipse cx="534.3" cy="173.3" rx="12.8" ry="9.0" fill="#e4c6c9"/><ellipse cx="530.8" cy="166.0" rx="12.8" ry="9.0" fill="#dcb8be"/><ellipse cx="538.0" cy="160.2" rx="12.8" ry="9.0" fill="#e4c6c9"/><ellipse cx="548.7" cy="161.7" rx="12.8" ry="9.0" fill="#dcb8be"/><ellipse cx="541.5" cy="167.5" rx="10.3" ry="7.3" fill="#e4c6c9"/></g>
    <ellipse cx="528" cy="161" rx="8" ry="7" fill="#e8cfd2"/><ellipse cx="553" cy="175" rx="9" ry="7" fill="#d9b3bb"/>
    <path d="M562.500 146.700l-4 9-21 8" stroke="#8a6a5a" stroke-width=".9" fill="none"/>
    <g opacity="1"><ellipse cx="605.5" cy="181.1" rx="7.6" ry="8.4" fill="#d9afb8"/><ellipse cx="597.9" cy="181.5" rx="7.6" ry="8.4" fill="#d2a3af"/><ellipse cx="595.3" cy="173.6" rx="7.6" ry="8.4" fill="#d9afb8"/><ellipse cx="601.2" cy="168.3" rx="7.6" ry="8.4" fill="#d2a3af"/><ellipse cx="607.6" cy="173.0" rx="7.6" ry="8.4" fill="#d9afb8"/><ellipse cx="601.5" cy="175.5" rx="6.1" ry="6.8" fill="#d9afb8"/><circle cx="601.5" cy="175.5" r="2.4" fill="#c9a27a"/></g>
  </g>
  <!-- signature -->
  <text x="563" y="90.300" font-family="Liberation Sans, sans-serif" font-weight="bold" font-size="5.800" fill="#111" letter-spacing="-.1" stroke="#111" stroke-width=".35">@IAMCUTES</text>
  <text x="563" y="96.400" font-family="Liberation Sans, sans-serif" font-weight="bold" font-size="5.800" fill="#111" letter-spacing="-.1" stroke="#111" stroke-width=".35">HP247</text>
  <!-- text strips -->
  <path d="M394 141.600l123 .3v19.800l-123-.3z" fill="#ebe5ce"/>
  <path d="M385.300 166l116.400-.2v22.800l-116.400.2z" fill="#ebe5ce"/>
  <text x="396.200" y="158.600" font-size="22" fill="#393d36" stroke="#393d36" stroke-width=".55" textLength="120" lengthAdjust="spacing">dream a little</text>
  <text x="387.500" y="183" font-size="22" fill="#393d36" stroke="#393d36" stroke-width=".55" textLength="113" lengthAdjust="spacing">dream of me</text>
  <!-- polaroid -->
  <rect x="394.400" y="185.300" width="194" height="220.500" fill="#e8eaf3"/>
  <rect x="406.900" y="195.500" width="169" height="166" fill="#fefefe"/>
  <!-- ui lettering -->
  <g font-weight="bold" font-style="italic" font-size="146" stroke-linejoin="round" stroke-linecap="round">
    <text transform="translate(437.500 314) skewX(5) scale(1.06 .965)" x="0" y="0" fill="#f9cdcd" stroke="#f9cdcd" stroke-width="5.500">ui</text>
    <text transform="translate(431 309) skewX(5) scale(1.06 .965)" x="0" y="0" fill="url(#og)" stroke="url(#og)" stroke-width="4">ui</text>
  </g>
  <path d="M430 265c1-6 3-8 4-3s1 12 3 20M487 270c1-5 3-6 3.500-1s.5 14 2 22M529 268c2-9 5-11 5-3s-3 18-2 25" stroke="#fff6e6" stroke-width="1.100" fill="none"/>
  <path d="M534 221c0-4 2-7 4-7s0 4-1 7" stroke="#fff6e6" stroke-width=".8" fill="none"/>
  <!-- bubbles -->
  <circle cx="573.700" cy="186.600" r="11" fill="#fbd8bb" fill-opacity=".95"/>
  <path d="M569 187c0-4 2-7 4-7" stroke="#fff" stroke-width="1" fill="none"/>
  <circle cx="415.200" cy="341.700" r="11.500" fill="#fbdcc4" fill-opacity=".92"/>
  <circle cx="545.400" cy="357.800" r="36.800" fill="#fbdcc6" fill-opacity=".96"/>
  <path d="M520 352c1-9 6-17 12-17 3 0-3 6-7 12z" stroke="#fff" stroke-width="1" fill="none"/>
  <!-- tapes -->
  <path d="M378 442l115.800-26.200 6 30-115.800 28.700z" fill="#f1d8c7"/>
  <path d="M429 450.500l119-22.500" stroke="#dcc5b2" stroke-width="1.600" fill="none"/>
  <path d="M430 450l118-22.300 4 26-114 29.600z" fill="#f4ddcd"/>
  <!-- pink flowers -->
  <g filter="url(#bl)">
    <g opacity="1"><ellipse cx="390.8" cy="392.5" rx="7.6" ry="7.6" fill="#efcbc6"/><ellipse cx="384.7" cy="397.1" rx="7.6" ry="7.6" fill="#e9bdbb"/><ellipse cx="378.5" cy="392.7" rx="7.6" ry="7.6" fill="#efcbc6"/><ellipse cx="380.7" cy="385.4" rx="7.6" ry="7.6" fill="#e9bdbb"/><ellipse cx="388.3" cy="385.3" rx="7.6" ry="7.6" fill="#efcbc6"/><ellipse cx="384.6" cy="390.6" rx="6.1" ry="6.1" fill="#efcbc6"/><circle cx="384.6" cy="390.6" r="2.2" fill="#b98a5a"/></g>
    <g opacity="1"><ellipse cx="428.2" cy="468.6" rx="7.6" ry="7.6" fill="#edc3c3"/><ellipse cx="420.6" cy="468.9" rx="7.6" ry="7.6" fill="#e5b2b6"/><ellipse cx="418.0" cy="461.8" rx="7.6" ry="7.6" fill="#edc3c3"/><ellipse cx="423.9" cy="457.0" rx="7.6" ry="7.6" fill="#e5b2b6"/><ellipse cx="430.3" cy="461.2" rx="7.6" ry="7.6" fill="#edc3c3"/><ellipse cx="424.2" cy="463.5" rx="6.1" ry="6.1" fill="#edc3c3"/><circle cx="424.2" cy="463.5" r="2.2" fill="#e8c9a0"/></g>
    <g opacity="1"><ellipse cx="419.2" cy="505.1" rx="7.3" ry="7.3" fill="#eec6c4"/><ellipse cx="414.3" cy="510.6" rx="7.3" ry="7.3" fill="#e6b6b8"/><ellipse cx="407.6" cy="507.6" rx="7.3" ry="7.3" fill="#eec6c4"/><ellipse cx="408.3" cy="500.3" rx="7.3" ry="7.3" fill="#e6b6b8"/><ellipse cx="415.5" cy="498.8" rx="7.3" ry="7.3" fill="#eec6c4"/><ellipse cx="413" cy="504.5" rx="5.9" ry="5.9" fill="#eec6c4"/><circle cx="413" cy="504.5" r="2.1" fill="#d9a070"/></g>
    <ellipse cx="372.500" cy="421" rx="5" ry="7" fill="#edbcbc"/>
    <ellipse cx="385" cy="402" rx="7" ry="3" fill="#efc4c2"/>
    <ellipse cx="375" cy="505" rx="7" ry="8" fill="#f0c6c2"/>
    <path d="M373 500l1.500-7" stroke="#b09a50" stroke-width="1.200"/>
    <path d="M401 428.500l5-3.500 5 3-1 6-6 1.500z" fill="#b66f84"/>
    <path d="M406 430l19.600-6.500" stroke="#5a3038" stroke-width=".9"/>
    <path d="M368 466l6-3 7 4 1 8-6 5h-8z" fill="#c47a8e"/>
    <path d="M372 469l16-16" stroke="#5a3038" stroke-width=".9"/>
  </g>
  <!-- dried flowers -->
  <g fill="none" stroke="#8f8c5e" stroke-width="1.100" stroke-linecap="round">
    <path d="M579 512.700c.5-12 1.500-22 2-32.700"/>
    <path d="M576.500 512.700c-8-32-25-69-43.500-95.200"/>
    <path d="M581 480c-6-20-14-38-20-52s-8-14-10.500-16.500"/>
    <path d="M581 480c-1-20-4-40-6.500-57l1-20"/>
    <path d="M581 480c8-14 16-30 22-46s8-20 11-27"/>
    <path d="M600.500 512.700c4-28 6-56 6.500-84s0-50 0-68"/>
    <path d="M533 417.500c-10-4-20-5.500-33-5"/>
    <path d="M561 427c4-8 8-14 12-20M603 434c3-12 3-24 2-34M590 455c6-8 12-14 20-20M575.500 423c6-6 14-10 25-3"/>
  </g>
  <g fill="#8e8a5a" filter="url(#bl)"><ellipse cx="502.9" cy="413.6" rx="2.8" ry="1.4" transform="rotate(-45 502.9 413.6)"/><ellipse cx="507.4" cy="409.7" rx="2.8" ry="1.4" transform="rotate(25 507.4 409.7)"/><ellipse cx="512.4" cy="412.2" rx="2.8" ry="1.4" transform="rotate(-45 512.4 412.2)"/><ellipse cx="515.9" cy="408.5" rx="2.8" ry="1.4" transform="rotate(25 515.9 408.5)"/><ellipse cx="521.1" cy="410.5" rx="2.8" ry="1.4" transform="rotate(-45 521.1 410.5)"/><ellipse cx="525.2" cy="406.3" rx="2.8" ry="1.4" transform="rotate(25 525.2 406.3)"/><ellipse cx="530.9" cy="409.3" rx="2.8" ry="1.4" transform="rotate(-45 530.9 409.3)"/><ellipse cx="553.6" cy="410.6" rx="2.8" ry="1.4" transform="rotate(-84 553.6 410.6)"/><ellipse cx="555.0" cy="404.2" rx="2.8" ry="1.4" transform="rotate(-14 555.0 404.2)"/><ellipse cx="560.3" cy="403.9" rx="2.8" ry="1.4" transform="rotate(-84 560.3 403.9)"/><ellipse cx="561.0" cy="396.8" rx="2.8" ry="1.4" transform="rotate(-14 561.0 396.8)"/><ellipse cx="566.8" cy="396.3" rx="2.8" ry="1.4" transform="rotate(-84 566.8 396.3)"/><ellipse cx="567.1" cy="390.0" rx="2.8" ry="1.4" transform="rotate(-14 567.1 390.0)"/><ellipse cx="574.1" cy="388.3" rx="2.8" ry="1.4" transform="rotate(-84 574.1 388.3)"/><ellipse cx="573.4" cy="382.8" rx="2.8" ry="1.4" transform="rotate(-14 573.4 382.8)"/><ellipse cx="590.4" cy="396.3" rx="2.8" ry="1.4" transform="rotate(-69 590.4 396.3)"/><ellipse cx="592.1" cy="390.4" rx="2.8" ry="1.4" transform="rotate(1 592.1 390.4)"/><ellipse cx="598.9" cy="390.2" rx="2.8" ry="1.4" transform="rotate(-69 598.9 390.2)"/><ellipse cx="600.1" cy="384.0" rx="2.8" ry="1.4" transform="rotate(1 600.1 384.0)"/><ellipse cx="606.7" cy="385.3" rx="2.8" ry="1.4" transform="rotate(-69 606.7 385.3)"/><ellipse cx="609.2" cy="379.3" rx="2.8" ry="1.4" transform="rotate(1 609.2 379.3)"/><ellipse cx="581.8" cy="410.3" rx="2.6" ry="1.3" transform="rotate(-5 581.8 410.3)"/><ellipse cx="587.3" cy="409.8" rx="2.6" ry="1.3" transform="rotate(65 587.3 409.8)"/><ellipse cx="590.2" cy="415.8" rx="2.6" ry="1.3" transform="rotate(-5 590.2 415.8)"/><ellipse cx="596.1" cy="415.2" rx="2.6" ry="1.3" transform="rotate(65 596.1 415.2)"/><ellipse cx="597.5" cy="420.5" rx="2.6" ry="1.3" transform="rotate(-5 597.5 420.5)"/><ellipse cx="603.4" cy="386.8" rx="2.6" ry="1.3" transform="rotate(-122 603.4 386.8)"/><ellipse cx="598.5" cy="382.0" rx="2.6" ry="1.3" transform="rotate(-52 598.5 382.0)"/><ellipse cx="604.1" cy="375.8" rx="2.6" ry="1.3" transform="rotate(-122 604.1 375.8)"/><ellipse cx="599.3" cy="369.9" rx="2.6" ry="1.3" transform="rotate(-52 599.3 369.9)"/><ellipse cx="604.3" cy="365.7" rx="2.6" ry="1.3" transform="rotate(-122 604.3 365.7)"/><ellipse cx="600.5" cy="359.9" rx="2.6" ry="1.3" transform="rotate(-52 600.5 359.9)"/><ellipse cx="605.2" cy="354.4" rx="2.6" ry="1.3" transform="rotate(-122 605.2 354.4)"/><ellipse cx="601.5" cy="348.8" rx="2.6" ry="1.3" transform="rotate(-52 601.5 348.8)"/><ellipse cx="605.9" cy="342.9" rx="2.6" ry="1.3" transform="rotate(-122 605.9 342.9)"/><ellipse cx="610.8" cy="382.5" rx="2.4" ry="1.2" transform="rotate(-120 610.8 382.5)"/><ellipse cx="608.5" cy="375.9" rx="2.4" ry="1.2" transform="rotate(-50 608.5 375.9)"/><ellipse cx="612.2" cy="371.1" rx="2.4" ry="1.2" transform="rotate(-120 612.2 371.1)"/><ellipse cx="608.5" cy="364.6" rx="2.4" ry="1.2" transform="rotate(-50 608.5 364.6)"/><ellipse cx="612.7" cy="359.3" rx="2.4" ry="1.2" transform="rotate(-120 612.7 359.3)"/><ellipse cx="609.8" cy="353.3" rx="2.4" ry="1.2" transform="rotate(-50 609.8 353.3)"/><ellipse cx="569.5" cy="411.7" rx="2.4" ry="1.2" transform="rotate(-76 569.5 411.7)"/><ellipse cx="570.8" cy="405.7" rx="2.4" ry="1.2" transform="rotate(-6 570.8 405.7)"/><ellipse cx="577.0" cy="404.9" rx="2.4" ry="1.2" transform="rotate(-76 577.0 404.9)"/><ellipse cx="578.7" cy="398.4" rx="2.4" ry="1.2" transform="rotate(-6 578.7 398.4)"/><ellipse cx="528.8" cy="403.9" rx="2.2" ry="1.1" transform="rotate(-97 528.8 403.9)"/><ellipse cx="529.3" cy="398.4" rx="2.2" ry="1.1" transform="rotate(-27 529.3 398.4)"/><ellipse cx="533.8" cy="394.4" rx="2.2" ry="1.1" transform="rotate(-97 533.8 394.4)"/></g>
  <g fill="#f0efe8" fill-opacity=".8" filter="url(#bl)"><ellipse cx="556.5" cy="412.2" rx="3.3" ry="2.7"/><ellipse cx="553.0" cy="400.9" rx="2.7" ry="2.4"/><ellipse cx="562.1" cy="404.1" rx="3.4" ry="2.7"/><ellipse cx="557.9" cy="393.3" rx="3.4" ry="2.8"/><ellipse cx="569.1" cy="396.2" rx="3.6" ry="3.1"/><ellipse cx="565.3" cy="387.3" rx="3.5" ry="2.6"/><ellipse cx="575.6" cy="389.7" rx="2.8" ry="2.9"/><ellipse cx="572.3" cy="379.3" rx="3.7" ry="2.6"/><ellipse cx="591.9" cy="397.0" rx="3.9" ry="3.7"/><ellipse cx="589.7" cy="386.7" rx="3.6" ry="3.7"/><ellipse cx="599.9" cy="391.7" rx="2.8" ry="3.0"/><ellipse cx="598.0" cy="381.2" rx="2.9" ry="2.7"/><ellipse cx="607.6" cy="385.6" rx="3.5" ry="3.6"/><ellipse cx="606.8" cy="374.8" rx="3.2" ry="3.6"/><ellipse cx="579.2" cy="411.1" rx="2.7" ry="2.7"/><ellipse cx="587.5" cy="406.0" rx="2.8" ry="2.8"/><ellipse cx="588.3" cy="416.6" rx="3.2" ry="2.2"/><ellipse cx="597.7" cy="411.6" rx="2.9" ry="2.6"/><ellipse cx="595.8" cy="420.3" rx="2.7" ry="2.3"/><ellipse cx="606.2" cy="385.4" rx="3.5" ry="3.6"/><ellipse cx="595.7" cy="379.1" rx="3.8" ry="3.5"/><ellipse cx="608.5" cy="376.0" rx="4.1" ry="3.8"/><ellipse cx="595.9" cy="368.2" rx="4.8" ry="3.2"/><ellipse cx="608.5" cy="363.2" rx="4.3" ry="3.0"/><ellipse cx="597.6" cy="358.0" rx="3.8" ry="3.6"/><ellipse cx="609.2" cy="353.3" rx="3.9" ry="3.3"/><ellipse cx="598.2" cy="347.1" rx="4.7" ry="4.2"/><ellipse cx="609.5" cy="340.7" rx="3.4" ry="3.4"/><ellipse cx="614.6" cy="380.9" rx="4.2" ry="3.9"/><ellipse cx="604.7" cy="373.8" rx="3.2" ry="2.8"/><ellipse cx="615.4" cy="369.3" rx="3.8" ry="3.7"/><ellipse cx="607.1" cy="363.3" rx="4.0" ry="3.2"/><ellipse cx="615.4" cy="358.2" rx="4.3" ry="3.1"/><ellipse cx="607.7" cy="350.4" rx="3.1" ry="2.7"/><ellipse cx="569.8" cy="412.2" rx="4.3" ry="3.5"/><ellipse cx="568.8" cy="401.5" rx="4.3" ry="3.5"/><ellipse cx="578.3" cy="405.3" rx="4.1" ry="2.8"/><ellipse cx="577.0" cy="395.6" rx="3.3" ry="3.1"/><ellipse cx="530.5" cy="402.7" rx="2.7" ry="2.8"/><ellipse cx="527.9" cy="395.6" rx="2.6" ry="1.8"/><ellipse cx="534.5" cy="394.7" rx="2.3" ry="2.3"/><ellipse cx="577" cy="401" rx="6" ry="5"/><ellipse cx="602" cy="362" rx="6" ry="12"/><ellipse cx="607" cy="346" rx="4" ry="7"/><ellipse cx="596" cy="383" rx="5" ry="6"/></g>
</svg>
</div>

<!-- RIGHT PANELS -->
<div style="left:817px;top:58px;width:207px;height:473px;background:#c5cace"></div>
<div class="hdr" style="left:817px;top:58px;width:207px"><span class="t" style="left:0;width:183px;text-align:center;font-size:8.87px;letter-spacing:-0.414px">Hoa tiêu</span><div class="fl" style="left:182.800px;top:1.700px"><svg width="10.500" height="10" viewBox="0 0 10.500 10"><path d="M6 2.800H2.300v5.200h5.200V5" fill="none" stroke="#9a9ea2" stroke-width=".9"/><path d="M5.500 5l3-3M6.500 1.800h2.200V4" fill="none" stroke="#9a9ea2" stroke-width=".9"/></svg></div><div class="cl" style="left:195.5px;top:2.500px"><svg width="10.500" height="10" viewBox="0 0 10.500 10"><path d="M2.800 2.500l5 5M7.800 2.500l-5 5" stroke="#8e9296" stroke-width="1.700"/></svg></div></div>
<div class="btn" style="left:820.4px;top:76.3px;width:18.9px;height:18.900px"><svg width="17" height="17" viewBox="0 0 17 17"><circle cx="7.300" cy="7.300" r="4" fill="#fafafa" stroke="#555" stroke-width="1.100"/><path d="M10.200 10.200l3.800 3.800" stroke="#555" stroke-width="1.800"/><path d="M7.300 5.500v3.600M6.500 6.200l.8-.7" stroke="#555" stroke-width=".8" fill="none"/></svg></div><div class="btn" style="left:848.5px;top:76.3px;width:18.9px;height:18.900px"><svg width="17" height="17" viewBox="0 0 17 17"><circle cx="7.300" cy="7.300" r="4" fill="#fafafa" stroke="#555" stroke-width="1.100"/><path d="M10.200 10.200l3.800 3.800" stroke="#555" stroke-width="1.800"/><path d="M5.300 7.300h4M7.300 5.300v4" stroke="#555" stroke-width="1"/></svg></div><div class="btn" style="left:871.8px;top:76.3px;width:18.9px;height:18.900px"><svg width="17" height="17" viewBox="0 0 17 17"><path d="M3 4.500h11v8H3z" fill="none" stroke="#555" stroke-width=".9"/><path d="M4.500 7.500v-1.500h2M12.500 7.500v-1.500h-2M4.500 9.500v1.500h2M12.500 9.500v1.500h-2" fill="none" stroke="#555" stroke-width=".9"/></svg></div><div class="btn" style="left:895px;top:76.3px;width:18.9px;height:18.900px"><svg width="17" height="17" viewBox="0 0 17 17"><circle cx="7.300" cy="7.300" r="4" fill="#fafafa" stroke="#555" stroke-width="1.100"/><path d="M10.200 10.200l3.800 3.800" stroke="#555" stroke-width="1.800"/><path d="M5.300 7.300h4" stroke="#555" stroke-width="1"/></svg></div><div class="btn" style="left:923.2px;top:76.3px;width:18.9px;height:18.900px"><svg width="17" height="17" viewBox="0 0 17 17"><path d="M8.500 3a5.500 5.500 0 1 1-5.300 4" fill="none" stroke="#555" stroke-width="1.200"/><path d="M8.800 1v4l-3-2z" fill="#555"/><path d="M5.500 7.500l5-1.500 1 4-5 1.500z" fill="#666"/></svg></div><div class="btn" style="left:946.8px;top:76.3px;width:18.9px;height:18.900px"><svg width="17" height="17" viewBox="0 0 17 17"><path d="M4 5h9v7H4z" fill="#aaa"/><path d="M2.500 3.500l2 2M14.500 3.500l-2 2M2.500 13.500l2-2M14.500 13.500l-2-2" stroke="#aaa" stroke-width="1"/></svg></div><div class="btn" style="left:970px;top:76.3px;width:18.9px;height:18.900px"><svg width="17" height="17" viewBox="0 0 17 17"><path d="M8.500 3a5.500 5.500 0 1 0 5.300 4" fill="none" stroke="#555" stroke-width="1.200"/><path d="M8.200 1v4l3-2z" fill="#555"/><path d="M5.500 6l5 1.500-1 4-5-1.500z" fill="#666"/></svg></div><div class="btn" style="left:998.4px;top:76.3px;width:18.9px;height:18.900px"><svg width="17" height="17" viewBox="0 0 17 17"><path d="M3.500 8h4v6h-4z" fill="#555"/><path d="M10 8h4v6h-4z" fill="#fff" stroke="#555" stroke-width=".9"/><path d="M5 6.500c0-3 6.500-3 7 0" fill="none" stroke="#555" stroke-width=".9"/><path d="M12.800 6.800l-1.800-.5 1.600-1.300z" fill="#555"/></svg></div><div class="sep" style="left:843.5px;top:81px;height:9px"></div><div class="sep" style="left:918px;top:81px;height:9px"></div><div class="sep" style="left:993.5px;top:81px;height:9px"></div>
<div style="left:817px;top:98px;width:207px;height:33.500px;background:#696c70"></div>
<svg width="17.800" height="31.500" viewBox="0 0 17.800 31.500" style="left:911.600px;top:98.700px"><rect width="17.800" height="31.500" fill="#d3a783"/><rect y="19.500" width="17.800" height="12" fill="#d6cfbc"/><rect x="1.900" y="7.900" width="14" height="15.900" fill="#e5e7f1"/><rect x="2.800" y="8.600" width="12.200" height="12" fill="#fff"/><text x="5" y="16.800" font-family="Liberation Serif,serif" font-style="italic" font-weight="bold" font-size="10" fill="#f6b25c">ui</text><circle cx="12.800" cy="20.300" r="2.600" fill="#fbdcc6"/><rect x="1.800" y="4.700" width="9" height="1.400" fill="#ebe5ce"/><rect x="1.200" y="6.500" width="8.500" height="1.400" fill="#ebe5ce"/><rect x="1" y="26" width="11" height="2.300" fill="#f3dccb" transform="rotate(-12 6 27)"/><path d="M15 31.500V24M16.500 31.500V20" stroke="#f4f3ee" stroke-width="1.200"/></svg><div style="left:898.500px;top:98.500px;width:44px;height:32px;border:1.400px solid #e3171f"></div>
<div class="dk" style="left:817px;top:131.500px;width:207px;height:3.200px"></div>
<div class="hdr" style="left:817px;top:134.7px;width:207px"><span class="t" style="left:0;width:183px;text-align:center;font-size:8.800px;letter-spacing:-.7px">Lớp</span><div class="fl" style="left:182.800px;top:1.700px"><svg width="10.500" height="10" viewBox="0 0 10.500 10"><path d="M6 2.800H2.300v5.200h5.200V5" fill="none" stroke="#9a9ea2" stroke-width=".9"/><path d="M5.500 5l3-3M6.500 1.800h2.200V4" fill="none" stroke="#9a9ea2" stroke-width=".9"/></svg></div><div class="cl" style="left:195.5px;top:2.500px"><svg width="10.500" height="10" viewBox="0 0 10.500 10"><path d="M2.800 2.500l5 5M7.800 2.500l-5 5" stroke="#8e9296" stroke-width="1.700"/></svg></div></div>
<div class="pbody" style="left:817px;top:150.500px;width:207px;height:330px"></div>
<span class="t" style="left:821.500px;top:157.500px;color:#333;font-size:9.06px;letter-spacing:-0.415px">Độ trong</span><div style="left:872.700px;top:155px;width:118.700px;height:12.200px;border:1px solid #5f7486;background:linear-gradient(to right,#d6ecfb,#8ccaf3 45%,#1c9be8)"></div><span class="t" style="left:996px;top:157.500px;color:#333;font-size:8.70px;letter-spacing:-0.410px">100 %</span>
<span class="t" style="left:821.500px;top:176.500px;color:#333;font-size:8.79px;letter-spacing:-0.415px">Pha trộn</span><div style="left:875.200px;top:172.400px;width:143.400px;height:16.600px;background:#fff;border:1px solid #a6aaae;border-radius:2px"><span class="t" style="left:2px;top:4px;color:#222;font-size:8.47px;letter-spacing:-0.418px">Bình thường</span><svg width="7" height="5" viewBox="0 0 7 5" style="left:132px;top:5.500px"><path d="M1 1l2.500 2.500L6 1z" fill="#b0b0b0"/></svg></div>
<div style="left:824.200px;top:196.900px;width:9.300px;height:9.400px;background:#cfd3d6;border:1px solid #a9adb1"></div><span class="t" style="left:837.800px;top:197.500px;color:#a6aaae;font-size:8.64px;letter-spacing:-0.414px">Bảo vệ alpha</span><div style="left:894px;top:196.900px;width:9.300px;height:9.400px;background:#fff;border:1px solid #555"></div><span class="t" style="left:907.600px;top:197.500px;color:#222;font-size:8.55px;letter-spacing:-0.420px">Xén bớt</span><div style="left:960.500px;top:196.900px;width:9.300px;height:9.400px;background:#fff;border:1px solid #555"></div><span class="t" style="left:973.600px;top:197.500px;color:#222;font-size:8.33px;letter-spacing:-0.418px">Khóa</span>
<div style="left:818.400px;top:211.500px;width:189.200px;height:242px;background:#808080"></div>
<div style="left:818.400px;top:211.500px;width:189.200px;height:180px;background:#fff"></div><div style="left:833.300px;top:211.500px;width:174.300px;height:30px;background:#7fcbf6"></div>
<div style="left:822.900px;top:223.5px;width:6.400px;height:6.400px;border-radius:50%;background:#cfcfcf;border:.8px solid #b0b0b0"></div><div style="left:843.800px;top:221.8px;width:27.200px;height:9.800px;background:#fff;overflow:hidden"><span class="t" style="left:1px;top:.5px;font-size:4.600px;font-weight:bold;letter-spacing:-.15px;color:#000;line-height:4.300px;white-space:normal;width:27px">@IAMCUTES<br>HP247</span></div><span class="t" style="left:883.600px;top:221.3px;font-size:9.500px;font-weight:bold;color:#0d1a2a;letter-spacing:-0.007px">@iamcutes</span>
<div style="left:822.900px;top:253.5px;width:6.400px;height:6.400px;border-radius:50%;background:#cfcfcf;border:.8px solid #b0b0b0"></div><div class="ck" style="left:850.600px;top:244.0px;width:14.400px;height:25.500px;border:.8px solid #a8a8a8;background-size:4px 4px;background-position:0 0,2px 2px;overflow:hidden"></div><span class="t" style="left:883.600px;top:251.5px;color:#111;font-size:9.10px;letter-spacing:-0.414px">Lớp6</span>
<div style="left:822.900px;top:283.5px;width:6.400px;height:6.400px;border-radius:50%;background:#cfcfcf;border:.8px solid #b0b0b0"></div><div class="ck" style="left:850.600px;top:274.0px;width:14.400px;height:25.500px;border:.8px solid #a8a8a8;background-size:4px 4px;background-position:0 0,2px 2px;overflow:hidden"><div style="left:7px;top:17px;width:5px;height:3px;background:#f9ddc0;border-radius:50%"></div></div><span class="t" style="left:883.600px;top:281.5px;color:#111;font-size:9.10px;letter-spacing:-0.414px">Lớp5</span>
<div style="left:822.900px;top:313.5px;width:6.400px;height:6.400px;border-radius:50%;background:#cfcfcf;border:.8px solid #b0b0b0"></div><div class="ck" style="left:850.600px;top:304.0px;width:14.400px;height:25.500px;border:.8px solid #a8a8a8;background-size:4px 4px;background-position:0 0,2px 2px;overflow:hidden"><span class="t" style="left:3.500px;top:7px;font-size:8px;color:#f2b37a;font-style:italic;font-weight:bold;letter-spacing:0">ui</span></div><span class="t" style="left:883.600px;top:311.5px;color:#111;font-size:9.10px;letter-spacing:-0.414px">Lớp2</span>
<div style="left:822.900px;top:343.5px;width:6.400px;height:6.400px;border-radius:50%;background:#cfcfcf;border:.8px solid #b0b0b0"></div><div class="ck" style="left:850.600px;top:334.0px;width:14.400px;height:25.500px;border:.8px solid #a8a8a8;background-size:4px 4px;background-position:0 0,2px 2px;overflow:hidden"><span class="t" style="left:3.500px;top:8px;font-size:8px;color:#f8d5d5;font-style:italic;font-weight:bold;letter-spacing:0">ui</span></div><span class="t" style="left:883.600px;top:341.5px;color:#111;font-size:9.10px;letter-spacing:-0.414px">Lớp2</span>
<div style="left:822.900px;top:373.5px;width:6.400px;height:6.400px;border-radius:50%;background:#cfcfcf;border:.8px solid #b0b0b0"></div><svg width="14.400" height="25.500" viewBox="0 0 17.800 31.500" preserveAspectRatio="none" style="left:850.600px;top:364px"><rect width="17.800" height="31.500" fill="#d09a70"/><rect y="19.500" width="17.800" height="8" fill="#d6cfbc"/><rect y="27.500" width="17.800" height="4" fill="#cf9a72"/><rect x="1.900" y="7.900" width="14" height="15.900" fill="#e5e7f1"/><rect x="2.800" y="8.600" width="12.200" height="12" fill="#fff"/><rect x=".4" y=".4" width="17" height="30.700" fill="none" stroke="#8a6a50" stroke-width=".9"/></svg><span class="t" style="left:883.600px;top:371.5px;color:#111;font-size:9.10px;letter-spacing:-0.414px">Lớp1</span>
<div style="left:818.400px;top:211.0px;width:189.200px;height:1px;background:#3c3c3c"></div><div style="left:818.400px;top:241.0px;width:189.200px;height:1px;background:#3c3c3c"></div><div style="left:818.400px;top:271.0px;width:189.200px;height:1px;background:#3c3c3c"></div><div style="left:818.400px;top:301.0px;width:189.200px;height:1px;background:#3c3c3c"></div><div style="left:818.400px;top:331.0px;width:189.200px;height:1px;background:#3c3c3c"></div><div style="left:818.400px;top:361.0px;width:189.200px;height:1px;background:#3c3c3c"></div><div style="left:818.400px;top:391.0px;width:189.200px;height:1px;background:#3c3c3c"></div><div style="left:818.400px;top:211.500px;width:1px;height:180px;background:#6a6a6a"></div><div style="left:832.800px;top:211.500px;width:1px;height:180px;background:#3c3c3c"></div><div style="left:1007px;top:211.500px;width:1px;height:180px;background:#3c3c3c"></div>
<div style="left:1008.500px;top:211.500px;width:14.500px;height:242px;background:#d0d4d7"></div><div style="left:1008.700px;top:219.400px;width:13.800px;height:224.500px;border-radius:5px;background:linear-gradient(to right,#bfc5c9,#b3b9be);"></div>
<div class="btn" style="left:821.5px;top:457.4px;width:18.9px;height:18.900px"><svg width="17" height="17" viewBox="0 0 17 17"><path d="M4.500 2.500h5.500l3 3v9h-8.500z" fill="#fff" stroke="#555" stroke-width="1"/><path d="M10 2.500v3h3" fill="none" stroke="#555" stroke-width=".9"/></svg></div><div class="btn" style="left:844.7px;top:457.4px;width:18.9px;height:18.900px"><svg width="17" height="17" viewBox="0 0 17 17"><path d="M4.500 2.500h5.500l3 3v9h-8.500z" fill="#fff" stroke="#555" stroke-width="1"/><path d="M10 2.500v3h3" fill="none" stroke="#555" stroke-width=".9"/><text x="6.800" y="12.500" font-size="6" fill="#555" font-family="Liberation Sans,sans-serif">8</text></svg></div><div class="btn" style="left:868.2px;top:457.4px;width:18.9px;height:18.900px"><svg width="17" height="17" viewBox="0 0 17 17"><path d="M4.500 2.500h5.500l3 3v9h-8.500z" fill="#fff" stroke="#555" stroke-width="1"/><path d="M10 2.500v3h3" fill="none" stroke="#555" stroke-width=".9"/><text x="7" y="12.500" font-size="6" fill="#555" font-family="Liberation Sans,sans-serif">1</text></svg></div><div class="btn" style="left:891.1px;top:457.4px;width:18.9px;height:18.900px"><svg width="17" height="17" viewBox="0 0 17 17"><defs><pattern id="ht" width="2.500" height="2.500" patternUnits="userSpaceOnUse" patternTransform="rotate(45)"><rect width="1.200" height="2.500" fill="#555"/></pattern></defs><rect x="3.500" y="3.500" width="10.500" height="10.500" fill="url(#ht)" stroke="#555" stroke-width=".9"/></svg></div><div class="btn" style="left:914.7px;top:457.4px;width:18.9px;height:18.900px"><svg width="17" height="17" viewBox="0 0 17 17"><path d="M3 4.500h4.500l1.300 1.500H14.500v7.500H3z" fill="#555"/></svg></div><div class="btn" style="left:942.8px;top:457.4px;width:18.9px;height:18.900px"><svg width="17" height="17" viewBox="0 0 17 17"><path d="M6.500 3.500h7v8h-7z" fill="#fff" stroke="#555" stroke-width=".9"/><path d="M4 6h7v8H4z" fill="#fff" stroke="#555" stroke-width=".9"/></svg></div><div class="btn" style="left:966.6px;top:457.4px;width:18.9px;height:18.900px"><svg width="17" height="17" viewBox="0 0 17 17"><path d="M3.500 4h4v3.500h-4zM3.500 10h4v3.500h-4z" fill="none" stroke="#999" stroke-width=".9"/><path d="M11 7h3.500v3.500H11z" fill="#999"/><path d="M7.500 5.800h2v6h-2" fill="none" stroke="#999" stroke-width=".8"/></svg></div><div class="btn" style="left:994.7px;top:457.4px;width:18.9px;height:18.900px"><svg width="17" height="17" viewBox="0 0 17 17"><path d="M4.500 6h8.500v8.500h-8.500z" fill="#555"/><path d="M3.500 4.500h10.500M7 3h3.500" stroke="#555" stroke-width="1.200"/><path d="M7 7.500v5.500M8.800 7.500v5.500M10.600 7.500v5.500" stroke="#fff" stroke-width=".8"/></svg></div><div class="sep" style="left:938.5px;top:462px;height:9px"></div><div class="sep" style="left:989.5px;top:462px;height:9px"></div>
<div class="dk" style="left:817px;top:480px;width:207px;height:3.700px"></div>
<div class="hdr" style="left:817px;top:483.7px;width:207px"><span class="t" style="left:0;width:183px;text-align:center;font-size:8.81px;letter-spacing:-0.412px">Reference</span><div class="fl" style="left:182.800px;top:1.700px"><svg width="10.500" height="10" viewBox="0 0 10.500 10"><path d="M6 2.800H2.300v5.200h5.200V5" fill="none" stroke="#9a9ea2" stroke-width=".9"/><path d="M5.500 5l3-3M6.500 1.800h2.200V4" fill="none" stroke="#9a9ea2" stroke-width=".9"/></svg></div><div class="cl" style="left:195.5px;top:2.500px"><svg width="10.500" height="10" viewBox="0 0 10.500 10"><path d="M2.800 2.500l5 5M7.800 2.500l-5 5" stroke="#8e9296" stroke-width="1.700"/></svg></div></div>
<div class="btn" style="left:820px;top:503.3px;width:18.9px;height:18.900px"><svg width="17" height="17" viewBox="0 0 17 17"><path d="M4 9.500h9a2.400 2.400 0 0 0 .3-4.700 3.300 3.300 0 0 0-6.300-.9A2.900 2.900 0 0 0 4 9.500z" fill="#444"/><path d="M7.300 8.500h2.400v3h1.800l-3 3.300-3-3.300h1.800z" fill="#444" stroke="#f0f0f0" stroke-width=".6"/></svg></div><div class="btn" style="left:843.2px;top:503.3px;width:18.9px;height:18.900px"><svg width="17" height="17" viewBox="0 0 17 17"><path d="M3 4.500h4l1.300 1.500H13v1.500H5.500L3 13z" fill="#555"/><path d="M5.800 8h9l-2.300 5.500H3.300z" fill="#555"/></svg></div><div class="btn" style="left:866.7px;top:503.3px;width:18.9px;height:18.900px"><svg width="17" height="17" viewBox="0 0 17 17"><path d="M5 5l7 7M12 5l-7 7" stroke="#999" stroke-width="1.300"/></svg></div><div class="btn" style="left:894.8px;top:503.3px;width:18.9px;height:18.900px"><svg width="17" height="17" viewBox="0 0 17 17"><circle cx="7.300" cy="7.300" r="4" fill="#fafafa" stroke="#888" stroke-width="1.100"/><path d="M10.200 10.200l3.800 3.800" stroke="#888" stroke-width="1.800"/><path d="M5.300 7.300h4M7.300 5.300v4" stroke="#888" stroke-width="1"/></svg></div><div class="btn" style="left:918.3px;top:503.3px;width:18.9px;height:18.900px"><svg width="17" height="17" viewBox="0 0 17 17"><path d="M3 4.500h11v8H3z" fill="none" stroke="#888" stroke-width=".9"/><path d="M4.500 7.500v-1.500h2M12.500 7.500v-1.500h-2M4.500 9.500v1.500h2M12.500 9.500v1.500h-2" fill="none" stroke="#888" stroke-width=".9"/></svg></div><div class="btn" style="left:941.5px;top:503.3px;width:18.9px;height:18.900px"><svg width="17" height="17" viewBox="0 0 17 17"><circle cx="7.300" cy="7.300" r="4" fill="#fafafa" stroke="#888" stroke-width="1.100"/><path d="M10.200 10.200l3.800 3.800" stroke="#888" stroke-width="1.800"/><path d="M5.300 7.300h4" stroke="#888" stroke-width="1"/></svg></div><div class="btn" style="left:970.3px;top:503.3px;width:18.9px;height:18.900px"><svg width="17" height="17" viewBox="0 0 17 17"><path d="M11.500 2.500l3 3-2 2-.8-.8-5.500 5.500-2.500 1 1-2.500 5.500-5.500-.8-.8z" fill="#fff" stroke="#666" stroke-width="1"/></svg></div><div class="sep" style="left:889.6px;top:508px;height:9px"></div><div class="sep" style="left:965px;top:508px;height:9px"></div><div class="sep" style="left:993.2px;top:508px;height:9px"></div><div style="left:1016px;top:502.400px;width:7px;height:21.300px;border-radius:3px;background:#f4f5f6;border:.8px solid #c4c8cb"></div>
<div class="ck" style="left:817px;top:524.700px;width:207px;height:6.300px;background-size:5px 5px;background-position:0 0,2.500px 2.500px"></div>

<!-- STATUS -->
<div id="status" style="left:0;top:530.800px;width:1024px;height:15.400px;background:#d6dadd">
  <span class="t" style="left:4.300px;top:4.500px;font-size:9.200px;color:#454545;letter-spacing:-0.360px">564 * 1002 pixel</span>
  <span class="t" style="left:71.800px;top:4.500px;font-size:9.200px;color:#454545;letter-spacing:-0.387px">(14.9 * 26.5cm)</span>
  <span class="t" style="left:136.900px;top:4.500px;font-size:9.200px;color:#454545;letter-spacing:-0.309px">96 dpi</span>
  <span class="t" style="left:167.400px;top:4.500px;color:#454545;font-size:8.62px;letter-spacing:-0.408px">57 %</span>
  <span class="t" style="left:193.100px;top:4.500px;color:#454545;font-size:9.10px;letter-spacing:-0.420px">( 932, 119 )</span>
  <span class="t" style="left:240.800px;top:4.500px;font-size:9px;color:#3a3a3a;letter-spacing:-0.034px">Vẽ một đường thẳng bằng cách giữ phím Shift, Thay đổi cỡ cọ bằng cách giữ phím Ctrl, Alt và kéo</span>
</div>
<!-- TASKBAR -->
<div id="task" style="left:0;top:546px;width:1024px;height:30px;background:#3b3932;overflow:hidden">
  <div style="left:0;top:0;width:1024px;height:30px;background:radial-gradient(ellipse 120px 22px at 390px 22px,rgba(86,96,52,.9),transparent),radial-gradient(ellipse 150px 24px at 560px 10px,rgba(100,92,62,.8),transparent),radial-gradient(ellipse 90px 18px at 300px 6px,rgba(96,76,56,.8),transparent),radial-gradient(ellipse 120px 20px at 700px 20px,rgba(74,70,50,.9),transparent),radial-gradient(ellipse 100px 20px at 90px 12px,rgba(84,68,52,.8),transparent),linear-gradient(to right,#42392f 0,#4e4438 20%,#524e3b 50%,#433f34 72%,#302f2b 86%,#2b2a29 100%)"></div>
  <div style="left:0;top:0;width:1024px;height:1px;background:#1d1d1b"></div>
  <div style="left:0;top:1px;width:1024px;height:1px;background:rgba(255,255,255,.22)"></div>
  <!-- start orb -->
  <div style="left:6.500px;top:1px;width:28px;height:28px;border-radius:50%;background:radial-gradient(circle at 50% 35%,#8fd0f4 0,#3b8fd0 38%,#1b4f8f 70%,#0e2b55 100%);border:1px solid #0b2140"></div>
  <svg width="16" height="16" viewBox="0 0 16 16" style="left:12.500px;top:7px"><path d="M1.500 3.500c2-1 3.500-1 5.200 0l-.8 3.800c-1.700-1-3.300-1-5.200 0z" fill="#f25a2a"/><path d="M7.800 4c1.900 1 3.500 1 5.400 0l-.8 3.800c-1.900 1-3.500 1-5.400 0z" fill="#8cc63f"/><path d="M.6 8.300c2-1 3.500-1 5.200 0l-.8 3.800c-1.700-1-3.300-1-5.200 0z" fill="#3aa0e6"/><path d="M6.900 8.800c1.900 1 3.500 1 5.400 0l-.8 3.800c-1.900 1-3.500 1-5.400 0z" fill="#fbc02d"/></svg>
  <!-- media player -->
  <div style="left:55.700px;top:5.800px;width:20.300px;height:18.200px;border-radius:2.500px;background:linear-gradient(135deg,#9fd3f2,#4f9fd8);border:1px solid #d5e9f7"></div>
  <div style="left:60px;top:8px;width:13px;height:13px;border-radius:50%;background:radial-gradient(circle at 40% 35%,#ffc36a,#f07a10)"></div>
  <svg width="7" height="8" viewBox="0 0 7 8" style="left:63.500px;top:10.500px"><path d="M1 .8l5 3.200-5 3.200z" fill="#fff"/></svg>
  <!-- IE -->
  <span class="t" style="left:104.500px;top:-5.500px;font-size:33px;font-weight:bold;color:#2b8be0;letter-spacing:0;text-shadow:0 0 1.500px #0b3d7a">e</span>
  <svg width="30" height="24" viewBox="0 0 30 24" style="left:99px;top:3px"><path d="M3.500 19.500c-3-3 2-10 10-14.500s13-4 12 0" fill="none" stroke="#f3c33a" stroke-width="2"/><path d="M3.500 19.500c2 2 7 1 12-2" fill="none" stroke="#f3c33a" stroke-width="1.500"/></svg>
  <!-- chrome -->
  <div style="left:148px;top:3.500px;width:23.400px;height:23.400px;border-radius:50%;background:conic-gradient(from -60deg,#e53d30 0 120deg,#fbc116 120deg 240deg,#2ea44f 240deg 360deg)"></div>
  <div style="left:154.300px;top:9.800px;width:10.800px;height:10.800px;border-radius:50%;background:#4a8af4;border:1.600px solid #fff"></div>
  <!-- coc coc button -->
  <div style="left:184px;top:2px;width:44px;height:28px;border-radius:2px;background:linear-gradient(rgba(180,176,160,.62),rgba(120,116,102,.55));border:1px solid rgba(220,220,210,.55)"></div>
  <div style="left:195.700px;top:4.500px;width:20px;height:20px;border-radius:50%;background:#5fae3a"></div>
  <div style="left:199.200px;top:9.500px;width:11px;height:11px;border-radius:50%;border:2.200px solid #fff"></div>
  <svg width="12" height="12" viewBox="0 0 12 12" style="left:205px;top:3.500px"><path d="M6 6L5 0h3zM6 6l4-5 2 2zM6 6l6-1v3z" fill="#fff"/></svg>
  <!-- jump paint button -->
  <div style="left:231px;top:2px;width:43.500px;height:28px;border-radius:2px;background:linear-gradient(rgba(240,240,238,.85),rgba(196,196,192,.8));border:1px solid rgba(255,255,255,.8)"></div>
  <div style="left:241.700px;top:6px;width:20.500px;height:19px;background:#fff;overflow:hidden"><span class="t" style="left:1px;top:1px;font-size:6.500px;font-weight:bold;color:#d8232a;letter-spacing:-.6px;font-family:'Liberation Sans','Noto Sans CJK JP',sans-serif">ジャンプ</span><span class="t" style="left:2.500px;top:10.500px;font-size:7px;font-weight:bold;color:#111;letter-spacing:-.3px">PAINT</span></div>
  <!-- tray -->
  <svg width="250" height="22" viewBox="760 550 250 22" style="left:760px;top:4px">
    <path d="M772 557.500a5.300 5.300 0 1 0 1.500 6.500" fill="none" stroke="#e0452a" stroke-width="3"/><path d="M764 566.500l7-3 1.500 3z" fill="#f0c070"/>
    <circle cx="786" cy="561.700" r="5.800" fill="#2f8fd8" stroke="#bfe0f6" stroke-width="1"/><circle cx="785" cy="560" r="2.600" fill="#123a7a"/>
    <circle cx="803.700" cy="561.700" r="4.700" fill="none" stroke="#e0262c" stroke-width="3"/>
    <rect x="816.300" y="555.500" width="12.300" height="12.300" fill="#2d7fd0"/><rect x="818" y="565" width="9" height="2.500" fill="#e8d24a"/><path d="M819 558h7M819 560.500h7M822.500 557v7" stroke="#d6ecff" stroke-width="1"/>
    <path d="M834.500 559.500h3l4-3.500v11.500l-4-3.500h-3z" fill="#d8442a"/>
    <rect x="852" y="555.700" width="12" height="12" fill="#f3d9dc" stroke="#e7a4ad" stroke-width=".8"/><path d="M854.500 558.500l3.500 7 3.500-7" fill="none" stroke="#d2283a" stroke-width="1.700"/>
    <path d="M871 567l4.500-7 6-3-1.500 6-6 4.500z" fill="#3a4fc4"/><path d="M870.500 568l2.500-3 1.500 1.500z" fill="#e8d9a0"/><circle cx="881" cy="566" r="2" fill="#c9b98a"/>
    <path d="M890 559.800h2.500l3.500-3.300v10.500l-3.500-3.300h-2.500z" fill="#f4f4f4"/>
    <path d="M907 567v-1.500h1.600V567zM909.300 567v-3h1.600v3zM911.600 567v-4.700h1.600V567zM913.900 567v-6.700h1.600V567zM916.200 567v-9h1.600v9z" fill="#f2f2f2"/>
    <ellipse cx="930" cy="561.700" rx="4.300" ry="6" fill="#1d56b8"/><path d="M927.800 559l4.400 5-2.200 2.200v-9l2.200 2.200-4.400 5" fill="none" stroke="#fff" stroke-width=".9"/>
    <rect x="945" y="556.500" width="7" height="11" rx="1" fill="none" stroke="#f4f4f4" stroke-width="1.200"/><rect x="947" y="555" width="3" height="1.500" fill="#f4f4f4"/><rect x="946.500" y="561" width="4" height="5" fill="#f4f4f4"/>
  </svg>
  <span class="t" style="left:964px;top:4.500px;width:44px;text-align:center;color:#fff;font-size:9.35px;letter-spacing:-0.419px">8:41 PM</span>
  <span class="t" style="left:960px;top:17.500px;width:52px;text-align:center;color:#fff;font-size:9.31px;letter-spacing:-0.415px">10/17/2021</span>
  <div style="left:1014px;top:1px;width:10px;height:29px;background:linear-gradient(to right,rgba(200,200,195,.5),rgba(120,120,115,.45));border-left:1px solid rgba(240,240,235,.5)"></div>
</div>

</div></body></html>
